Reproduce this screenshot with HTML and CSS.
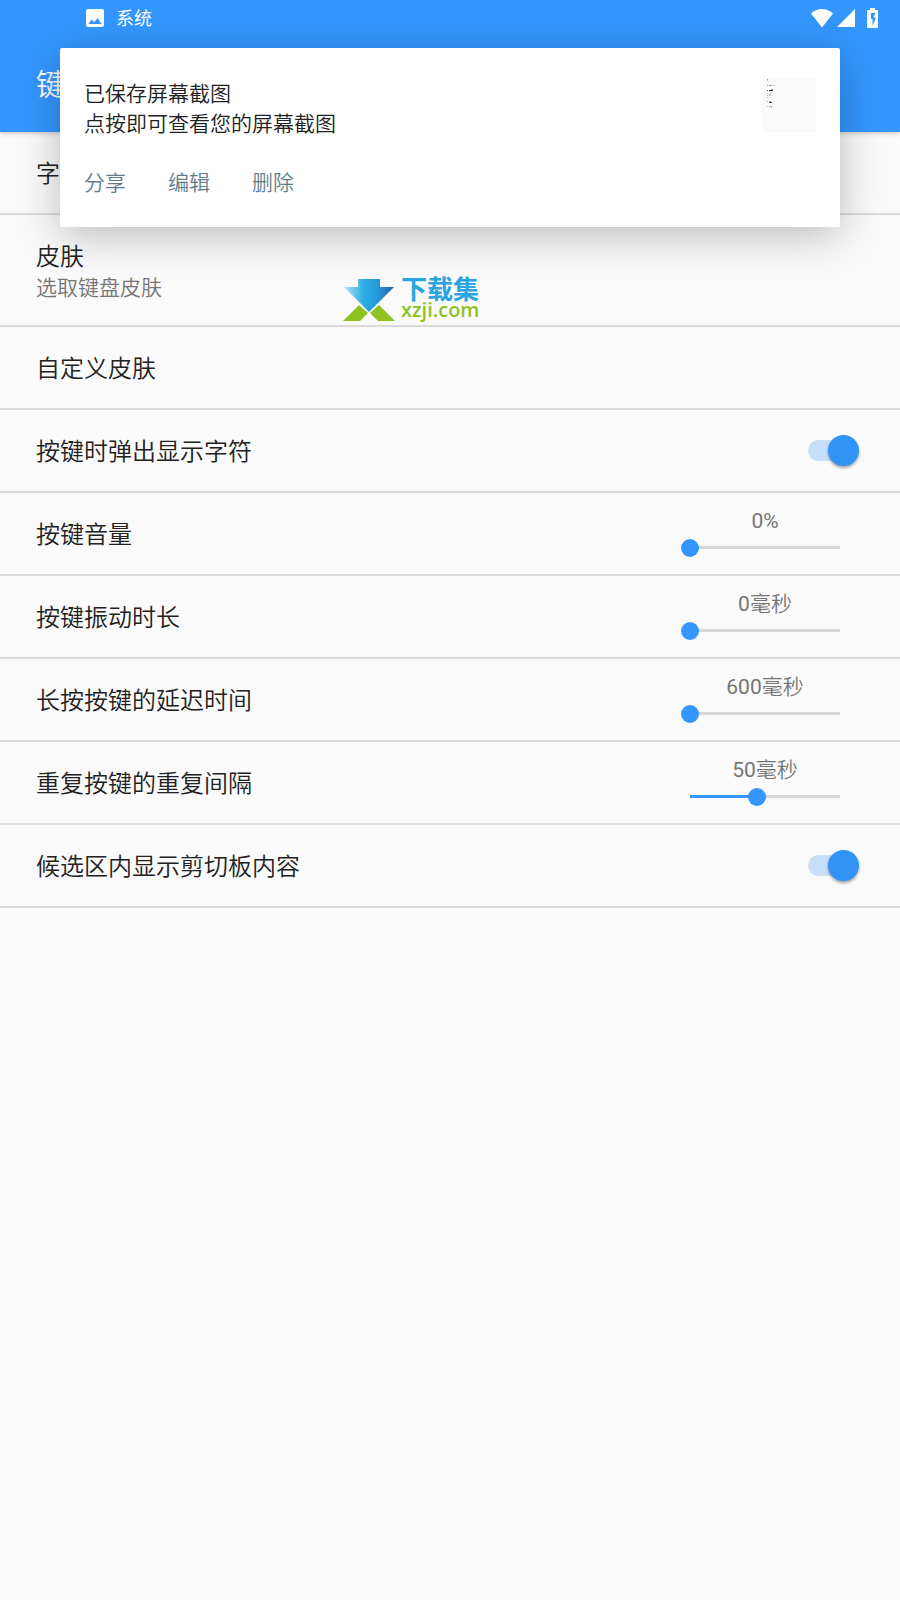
FILE: index.html
```html
<!DOCTYPE html>
<html lang="zh-CN">
<head>
<meta charset="utf-8">
<meta name="viewport" content="width=device-width, initial-scale=1">
<title>键盘</title>
<link rel="stylesheet" href="styles.css">
</head>
<body>
<header class="top">
  <div class="status">
    <svg class="status-pic" viewBox="0 0 18 18" width="18" height="18" aria-hidden="true"><path fill="#fff" fill-rule="evenodd" d="M2 0h14a2 2 0 0 1 2 2v14a2 2 0 0 1-2 2H2a2 2 0 0 1-2-2V2a2 2 0 0 1 2-2zM2.500 15h13L11.500 9 8 13.200 5.500 10.500z"/></svg>
    <span class="status-name">系统</span>
    <svg class="wifi" viewBox="0 0 22 19" width="22" height="19" aria-hidden="true"><path fill="#fff" d="M0 4.500C6-1.500 16-1.500 22 4.500L11 18.500z"/></svg>
    <svg class="signal" viewBox="0 0 18 18" width="18" height="18" aria-hidden="true"><path fill="#fff" d="M0 18L18 0v18z"/></svg>
    <svg class="battery" viewBox="0 0 11 20" width="11" height="20" aria-hidden="true"><path fill="#fff" fill-rule="evenodd" d="M3 0h5v2h2a1 1 0 0 1 1 1v16a1 1 0 0 1-1 1H1a1 1 0 0 1-1-1V3a1 1 0 0 1 1-1h2zM4 5v6h1.500v7L9 9.500H6.500L8.500 5z"/></svg>
  </div>
  <h1 class="title">键</h1>
</header>

<main class="list">
  <section class="row"><span class="name">字</span></section>
  <section class="row row-tall">
    <div class="stack"><span class="name">皮肤</span><span class="hint">选取键盘皮肤</span></div>
  </section>
  <section class="row"><span class="name">自定义皮肤</span></section>
  <section class="row">
    <label class="name" for="popup">按键时弹出显示字符</label>
    <input class="switch" id="popup" type="checkbox" checked>
  </section>
  <section class="row">
    <label class="name" for="volume">按键音量</label>
    <div class="adjust"><output class="value" for="volume"><span class="number">0%</span></output><input class="slider" id="volume" type="range" min="0" max="100" value="0"></div>
  </section>
  <section class="row">
    <label class="name" for="vibrate">按键振动时长</label>
    <div class="adjust"><output class="value" for="vibrate"><span class="number">0</span>毫秒</output><input class="slider" id="vibrate" type="range" min="0" max="100" value="0"></div>
  </section>
  <section class="row">
    <label class="name" for="delay">长按按键的延迟时间</label>
    <div class="adjust"><output class="value" for="delay"><span class="number">600</span>毫秒</output><input class="slider" id="delay" type="range" min="600" max="1000" value="600"></div>
  </section>
  <section class="row">
    <label class="name" for="repeat">重复按键的重复间隔</label>
    <div class="adjust"><output class="value" for="repeat"><span class="number">50</span>毫秒</output><input class="slider" id="repeat" type="range" min="10" max="100" value="50" style="--fill:44%"></div>
  </section>
  <section class="row">
    <label class="name" for="clip">候选区内显示剪切板内容</label>
    <input class="switch" id="clip" type="checkbox" checked>
  </section>
</main>

<div class="brand">
  <svg viewBox="0 0 52 42" width="52" height="42" aria-hidden="true">
    <defs><linearGradient id="arrow" x1="0" y1="0" x2="1" y2="0"><stop offset="0" stop-color="#b4e2f6"/><stop offset=".4" stop-color="#2cace5"/><stop offset=".65" stop-color="#239cdb"/><stop offset="1" stop-color="#2560aa"/></linearGradient></defs>
    <path fill="url(#arrow)" d="M15 0h22v8h14L26 33 1 8h14z"/>
    <path fill="#8dc21f" d="M16 26l9 8-8 8H0zM36 26l-9 8 8 8h17z"/>
  </svg>
  <div class="brand-text"><span class="brand-name">下载集</span><span class="brand-site">xzji.com</span></div>
</div>

<aside class="notice">
  <div class="notice-head">
    <p class="notice-text">已保存屏幕截图<br>点按即可查看您的屏幕截图</p>
    <svg class="thumb" viewBox="0 0 54 54" width="54" height="54" aria-hidden="true">
      <path fill="#fafafa" d="M0 0h54v54H0z"/>
      <path stroke="#bbb" d="M5 2.500h1M9 7.500h2M12 7.500h1M5 17.500h1M7 17.500h2M5 19.500h1M5 23.500h1M5 28.500h1M7 28.500h3M7 16.500h2"/>
      <path stroke="#999" d="M5 1.500h1M5 7.500h1M7 7.500h2M9 11.500h2M7 23.500h2M9 29.500h1"/>
      <path stroke="#444" d="M5 12.500h1M7 12.500h4M7 24.500h3"/>
    </svg>
  </div>
  <div class="actions"><button type="button">分享</button><button type="button">编辑</button><button type="button">删除</button></div>
</aside>
</body>
</html>
```
FILE: styles.css
```css
* { box-sizing: border-box; }

body {
  margin: 0;
  position: relative;
  min-height: 100vh;
  background: #fafafa;
  color: #212121;
  font-family: Roboto, "Noto Sans CJK SC", sans-serif;
  font-weight: 350;
}

.top {
  position: relative;
  background: #3397ff;
  color: #fff;
  box-shadow: 0 1px 5px rgba(0, 0, 0, .22);
}

.status {
  display: flex;
  align-items: center;
  height: 36px;
  padding: 0 22px 0 86px;
}

.status-name {
  margin-left: 12px;
  padding-top: 2px;
  font-size: 18px;
  font-weight: 400;
  line-height: 34px;
}

.wifi { margin-left: auto; }
.signal { margin-left: 4px; }
.battery { margin-left: 12px; }

.title {
  margin: 0;
  padding: 2px 36px 0;
  font-size: 30px;
  font-weight: 350;
  line-height: 94px;
}

.row {
  display: flex;
  align-items: center;
  justify-content: space-between;
  min-height: 83px;
  padding: 0 36px;
  border-bottom: 2px solid #dadada;
}

.row-tall {
  min-height: 112px;
  align-items: flex-start;
  padding-top: 24px;
}

.stack {
  display: flex;
  flex-direction: column;
}

.name {
  padding-top: 2px;
  font-size: 24px;
  line-height: 32px;
}

.hint {
  color: #757575;
  font-size: 21px;
  line-height: 30px;
}

.adjust {
  display: flex;
  flex-direction: column;
  align-items: center;
  margin: 0 15px 5px 0;
}

.value {
  color: #757575;
  font-size: 21px;
  line-height: 30px;
}

.number { font-weight: 400; }

.slider {
  --fill: 0%;
  appearance: none;
  width: 168px;
  height: 18px;
  margin: 3px 0 0;
  background: none;
}

.slider::-webkit-slider-runnable-track {
  height: 18px;
  background: linear-gradient(90deg, #3397ff var(--fill), #d6d6d6 var(--fill)) center / calc(100% - 18px) 3px no-repeat;
}

.slider::-webkit-slider-thumb {
  appearance: none;
  width: 18px;
  height: 18px;
  border-radius: 50%;
  background: #3397ff;
}

.switch {
  appearance: none;
  position: relative;
  width: 46px;
  height: 21px;
  margin: 0 10px 0 0;
  border-radius: 11px;
  background: #c6dff9;
}

.switch::after {
  content: "";
  position: absolute;
  top: -5px;
  left: -5px;
  width: 31px;
  height: 31px;
  border-radius: 50%;
  background: #fafafa;
  box-shadow: 0 2px 3px rgba(0, 0, 0, .35);
}

.switch:checked::after {
  left: 20px;
  background: #3193f5;
}

.brand {
  position: absolute;
  top: 279px;
  left: 343px;
  display: flex;
  gap: 6px;
}

.brand-text {
  display: flex;
  flex-direction: column;
}

.brand-name {
  color: #2aa5df;
  font-size: 26px;
  font-weight: 700;
  line-height: 22px;
}

.brand-site {
  color: #8dc21f;
  font-family: "Open Sans", sans-serif;
  font-size: 20px;
  font-weight: 600;
  line-height: 18px;
}

.notice {
  position: absolute;
  top: 48px;
  left: 60px;
  right: 60px;
  padding: 30px 24px 28px;
  border-radius: 2px;
  background: #fff;
  box-shadow: 0 8px 44px rgba(0, 0, 0, .26);
}

.notice-head {
  display: flex;
  justify-content: space-between;
}

.notice-text {
  margin: 0;
  padding-top: 1px;
  font-size: 21px;
  line-height: 30px;
}

.actions {
  display: flex;
  gap: 42px;
  margin-top: 29px;
  padding-bottom: 1px;
}

.actions button {
  padding: 0;
  border: 0;
  background: none;
  color: #607d8b;
  font: inherit;
  font-size: 21px;
  line-height: 30px;
}
```
